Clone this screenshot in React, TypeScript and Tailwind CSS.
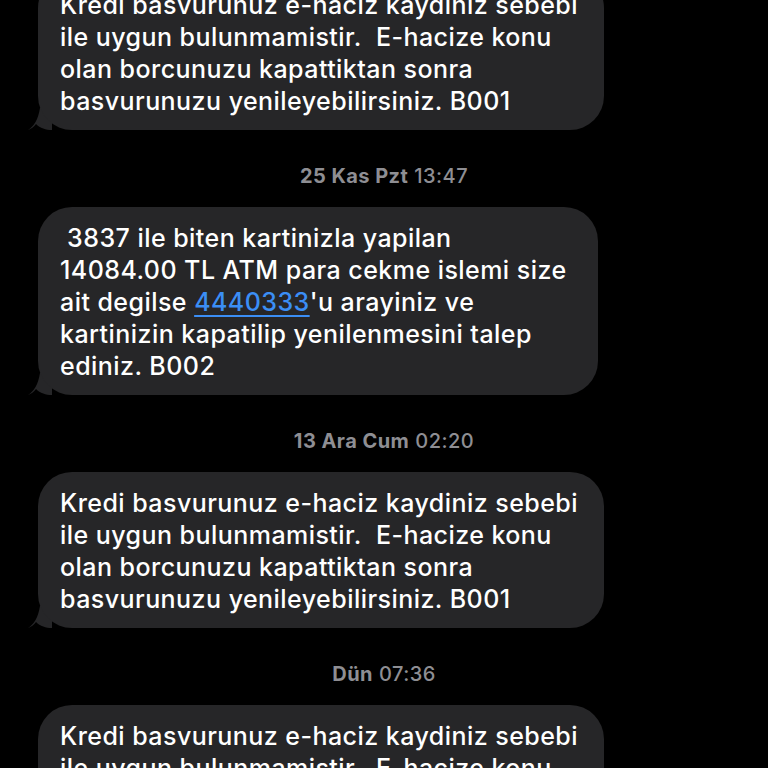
import React from "react";

const font = { fontFamily: 'Inter, "Noto Sans", "Liberation Sans", sans-serif' };

function Tail() {
  return (
    <svg
      className="absolute bottom-0 left-[-10px]"
      width="24"
      height="22"
      viewBox="0 0 24 22"
    >
      <path d="M12 0 L24 0 L24 22 C18 22 12 20 8 16 C6 19 3 21 0 22 C6 18 10 12 12 0 Z" fill="#262628" />
    </svg>
  );
}

function Bubble({ lines, width, className = "" }: { lines: React.ReactNode[]; width: string; className?: string }) {
  return (
    <div className={`relative ml-[38px] ${width} ${className}`}>
      <div className="relative z-10 rounded-[34px] bg-[#262628] pl-[22px] pr-[20px] pt-[15px] pb-[13px] text-[25px] leading-[32px] font-medium tracking-[0.45px] text-white whitespace-nowrap">
        {lines.map((l, i) => (
          <div key={i}>{l}</div>
        ))}
      </div>
      <Tail />
    </div>
  );
}

function Stamp({ day, time }: { day: string; time: string }) {
  return (
    <div className="mt-[34px] mb-[19px] text-center text-[20px] leading-[24px] tracking-[0.45px] text-[#8e8e93]">
      <span className="font-bold">{day}</span> <span className="font-medium">{time}</span>
    </div>
  );
}

const kredi = [
  "Kredi basvurunuz e-haciz kaydiniz sebebi",
  "ile uygun bulunmamistir.\u00a0 E-hacize konu",
  "olan borcunuzu kapattiktan sonra",
  "basvurunuzu yenileyebilirsiniz. B001",
];

export default function App() {
  return (
    <div className="h-[768px] w-[768px] overflow-hidden bg-black" style={font}>
      <Bubble lines={kredi} width="w-[566px]" className="-mt-[26px]" />
      <Stamp day="25 Kas Pzt" time="13:47" />
      <Bubble
        width="w-[560px]"
        lines={[
          "\u00a03837 ile biten kartinizla yapilan",
          "14084.00 TL ATM para cekme islemi size",
          <>
            ait degilse{" "}
            <span className="text-[#3b8ef5] underline decoration-[2px] underline-offset-[4px]">4440333</span>
            'u arayiniz ve
          </>,
          "kartinizin kapatilip yenilenmesini talep",
          "ediniz. B002",
        ]}
      />
      <Stamp day="13 Ara Cum" time="02:20" />
      <Bubble lines={kredi} width="w-[566px]" />
      <Stamp day="Dün" time="07:36" />
      <Bubble lines={kredi} width="w-[566px]" />
    </div>
  );
}
